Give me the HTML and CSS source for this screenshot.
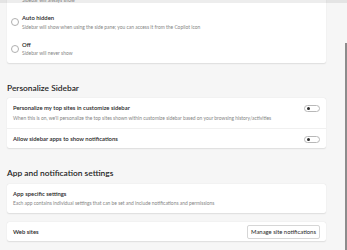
FILE: index.html
```html
<!DOCTYPE html>
<html lang="en">
<head>
<meta charset="utf-8">
<title>Sidebar settings</title>
<link rel="stylesheet" href="styles.css">
</head>
<body>
<div class="topbar"></div>
<div class="scroll-thumb"></div>
<main class="page">
  <section class="card">
    <div class="radio-row">
      <span class="radio"></span>
      <div class="text">
        <div class="title">Always on</div>
        <div class="desc">Sidebar will always show</div>
      </div>
    </div>
    <div class="radio-row">
      <span class="radio"></span>
      <div class="text">
        <div class="title">Auto hidden</div>
        <div class="desc">Sidebar will show when using the side pane; you can access it from the Copilot icon</div>
      </div>
    </div>
    <div class="radio-row">
      <span class="radio"></span>
      <div class="text">
        <div class="title">Off</div>
        <div class="desc">Sidebar will never show</div>
      </div>
    </div>
  </section>

  <h2 class="section-title">Personalize Sidebar</h2>
  <section class="card">
    <div class="row row-tall">
      <div class="text">
        <div class="title">Personalize my top sites in customize sidebar</div>
        <div class="desc">When this is on, we'll personalize the top sites shown within customize sidebar based on your browsing history/activities</div>
      </div>
      <span class="toggle"><span class="knob"></span></span>
    </div>
    <div class="row row-short divided">
      <div class="text">
        <div class="title">Allow sidebar apps to show notifications</div>
      </div>
      <span class="toggle"><span class="knob"></span></span>
    </div>
  </section>

  <h2 class="section-title">App and notification settings</h2>
  <section class="card">
    <div class="row row-tall">
      <div class="text">
        <div class="title">App specific settings</div>
        <div class="desc">Each app contains individual settings that can be set and include notifications and permissions</div>
      </div>
    </div>
  </section>
  <section class="card card-gap">
    <div class="row row-button">
      <div class="title">Web sites</div>
      <button class="btn" type="button">Manage site notifications</button>
    </div>
  </section>
</main>
</body>
</html>
```
FILE: styles.css
```css
* { box-sizing: border-box; }

html, body {
  margin: 0;
  height: 250px;
  overflow: hidden;
  background: #f6f6f6;
  font-family: "Lato", "Liberation Sans", sans-serif;
  color: #1b1b1b;
}

.topbar {
  position: fixed;
  top: 0;
  left: 0;
  right: 0;
  height: 3px;
  background: rgba(0, 0, 0, 0.07);
  z-index: 2;
}

.scroll-thumb {
  position: fixed;
  top: 43px;
  right: 0;
  bottom: 0;
  width: 2px;
  background: #8c8c8c;
  z-index: 2;
}

.page {
  width: 319px;
  margin: -17.1px 0 0 7px;
}

.card {
  background: #ffffff;
  border-radius: 2px;
  box-shadow: 0 0.6px 1.4px rgba(0, 0, 0, 0.1), 0 0.1px 0.4px rgba(0, 0, 0, 0.08);
}

.card-gap { margin-top: 8.7px; }

.title {
  font-size: 5.9px;
  line-height: 8px;
  font-weight: 600;
  color: #262626;
  white-space: nowrap;
}

.desc {
  font-size: 4.93px;
  line-height: 7px;
  color: #858585;
  white-space: nowrap;
}

.radio-row {
  display: flex;
  align-items: center;
  gap: 3px;
  padding: 4.26px 6px 5.64px 4px;
}
.radio-row .desc { margin-top: 1.8px; }

.radio {
  flex: none;
  width: 8px;
  height: 8px;
  border: 0.8px solid #b0b0b0;
  border-radius: 50%;
  background: #fff;
}

.section-title {
  margin: 19px 0 4.3px;
  font-size: 8.4px;
  line-height: 12px;
  font-weight: 600;
  color: #262626;
}

.row {
  display: flex;
  align-items: flex-start;
  justify-content: space-between;
  padding: 0 6px;
}
.row .text { flex: 1; min-width: 0; }
.row-tall { padding-top: 6px; padding-bottom: 5.9px; }
.row-tall .desc { margin-top: 2.7px; }
.row-short { padding-top: 6.3px; padding-bottom: 5.4px; }
.divided { border-top: 1px solid #f0f0f0; }

.toggle {
  flex: none;
  position: relative;
  width: 16.5px;
  height: 7px;
  margin-top: 0.5px;
  border: 0.8px solid #b8b8b8;
  border-radius: 4px;
  background: #fff;
}
.knob {
  position: absolute;
  left: 2px;
  top: 1.2px;
  width: 3.2px;
  height: 3.2px;
  border-radius: 50%;
  background: #2b2b2b;
}

.row-button {
  align-items: center;
  padding-top: 2.5px;
  padding-bottom: 2.5px;
}

.btn {
  height: 14px;
  width: 73px;
  padding: 0;
  border: 0.8px solid #d6d6d6;
  border-radius: 2px;
  background: #fff;
  font-family: "Lato", "Liberation Sans", sans-serif;
  font-size: 5.9px;
  font-weight: 400;
  color: #262626;
}
```
